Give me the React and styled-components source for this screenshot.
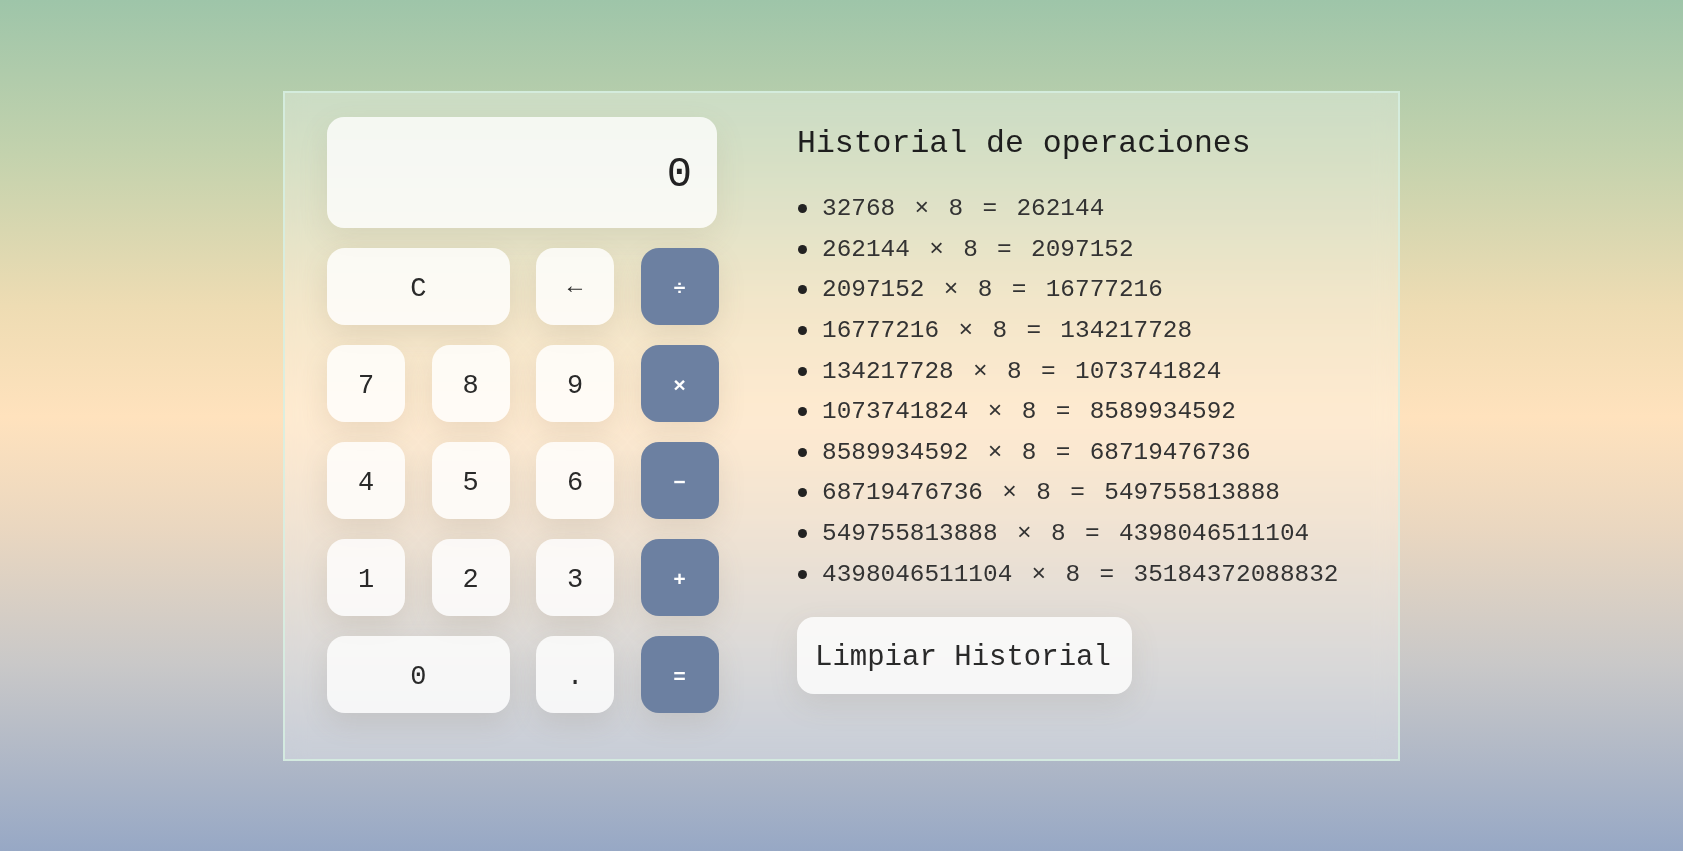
import React, { useState } from "react";
import styled, { createGlobalStyle } from "styled-components";

const Global = createGlobalStyle`
  html, body { margin: 0; padding: 0; }
  body { font-family: "Liberation Mono", "DejaVu Sans Mono", monospace; }
  * { box-sizing: border-box; }
`;

const Page = styled.div`
  min-height: 100vh;
  display: flex;
  align-items: center;
  justify-content: center;
  background: linear-gradient(
    to bottom,
    #9ec5a9 0%,
    #c3d2ad 18%,
    #eedcb3 36%,
    #ffe2bd 49%,
    #ead7c0 62%,
    #c9c8c8 78%,
    #97a8c5 100%
  );
`;

const Panel = styled.div`
  width: 1117px;
  height: 670px;
  border: 2px solid rgba(214, 238, 226, 0.85);
  background: rgba(255, 255, 255, 0.3);
  backdrop-filter: blur(12px);
  padding: 24px 40px 0 42px;
  display: flex;
  gap: 78px;
  align-items: flex-start;
`;

const Calc = styled.div`
  width: 392px;
  display: flex;
  flex-direction: column;
  gap: 20px;
`;

const Display = styled.div`
  width: 390px;
  height: 111px;
  border-radius: 17px;
  background: rgba(255, 255, 255, 0.78);
  box-shadow: 0 10px 30px rgba(120, 110, 80, 0.12);
  display: flex;
  align-items: center;
  justify-content: flex-end;
  padding: 5px 25px 0;
  font-size: 42px;
  color: #222;
`;

const Keypad = styled.div`
  display: grid;
  grid-template-columns: repeat(4, 78px);
  grid-auto-rows: 77px;
  column-gap: 26.5px;
  row-gap: 20px;
`;

const Key = styled.button`
  grid-column: span ${(p) => p.$span || 1};
  border: none;
  border-radius: 18px;
  font-family: "Liberation Mono", "DejaVu Sans Mono", monospace;
  font-size: ${(p) => (p.$op ? "21px" : p.$small ? "24px" : "27px")};
  font-weight: ${(p) => (p.$op ? 700 : 400)};
  color: ${(p) => (p.$op ? "#ffffff" : "#2a2a2a")};
  background: ${(p) => (p.$op ? "#6c80a1" : "rgba(255, 255, 255, 0.8)")};
  box-shadow: 0 10px 28px rgba(110, 100, 80, 0.14);
  display: flex;
  align-items: center;
  justify-content: center;
  cursor: pointer;
  padding: ${(p) => (p.$small ? "0" : "6px 0 0")};
`;

const History = styled.div`
  display: flex;
  flex-direction: column;
  align-items: flex-start;
`;

const Title = styled.h2`
  margin: 9px 0 0;
  font-size: 31.5px;
  line-height: 36px;
  font-weight: 400;
  color: #1e1e1e;
`;

const List = styled.ul`
  list-style: none;
  margin: 27px 0 0;
  padding: 0;
`;

const Item = styled.li`
  display: flex;
  align-items: center;
  height: 40.6px;
  font-size: 24.4px;
  word-spacing: 4.7px;
  color: #333;
  white-space: pre;

  &::before {
    content: "";
    width: 9px;
    height: 9px;
    border-radius: 50%;
    background: #222;
    margin: 0 15px 0 1px;
    flex: none;
  }
`;

const ClearButton = styled.button`
  margin-top: 23px;
  width: 335px;
  height: 77px;
  border: none;
  border-radius: 17px;
  background: rgba(255, 255, 255, 0.8);
  box-shadow: 0 10px 30px rgba(110, 100, 80, 0.12);
  font-family: "Liberation Mono", "DejaVu Sans Mono", monospace;
  font-size: 29px;
  color: #2a2a2a;
  padding: 4px 18px 0;
  text-align: left;
  cursor: pointer;
`;

const history = [
  ["32768", "8", "262144"],
  ["262144", "8", "2097152"],
  ["2097152", "8", "16777216"],
  ["16777216", "8", "134217728"],
  ["134217728", "8", "1073741824"],
  ["1073741824", "8", "8589934592"],
  ["8589934592", "8", "68719476736"],
  ["68719476736", "8", "549755813888"],
  ["549755813888", "8", "4398046511104"],
  ["4398046511104", "8", "35184372088832"],
];

const keys = [
  { l: "C", span: 2 },
  { l: "←", small: true },
  { l: "÷", op: true },
  { l: "7" }, { l: "8" }, { l: "9" }, { l: "×", op: true },
  { l: "4" }, { l: "5" }, { l: "6" }, { l: "−", op: true },
  { l: "1" }, { l: "2" }, { l: "3" }, { l: "+", op: true },
  { l: "0", span: 2 },
  { l: "." },
  { l: "=", op: true },
];

export default function App() {
  const [items, setItems] = useState(history);
  return (
    <>
      <Global />
      <Page>
        <Panel>
          <Calc>
            <Display>0</Display>
            <Keypad>
              {keys.map((k, i) => (
                <Key key={i} $span={k.span} $op={k.op} $small={k.small}>
                  {k.l}
                </Key>
              ))}
            </Keypad>
          </Calc>
          <History>
            <Title>Historial de operaciones</Title>
            <List>
              {items.map(([a, b, r], i) => (
                <Item key={i}>{`${a} × ${b} = ${r}`}</Item>
              ))}
            </List>
            <ClearButton onClick={() => setItems([])}>Limpiar Historial</ClearButton>
          </History>
        </Panel>
      </Page>
    </>
  );
}
